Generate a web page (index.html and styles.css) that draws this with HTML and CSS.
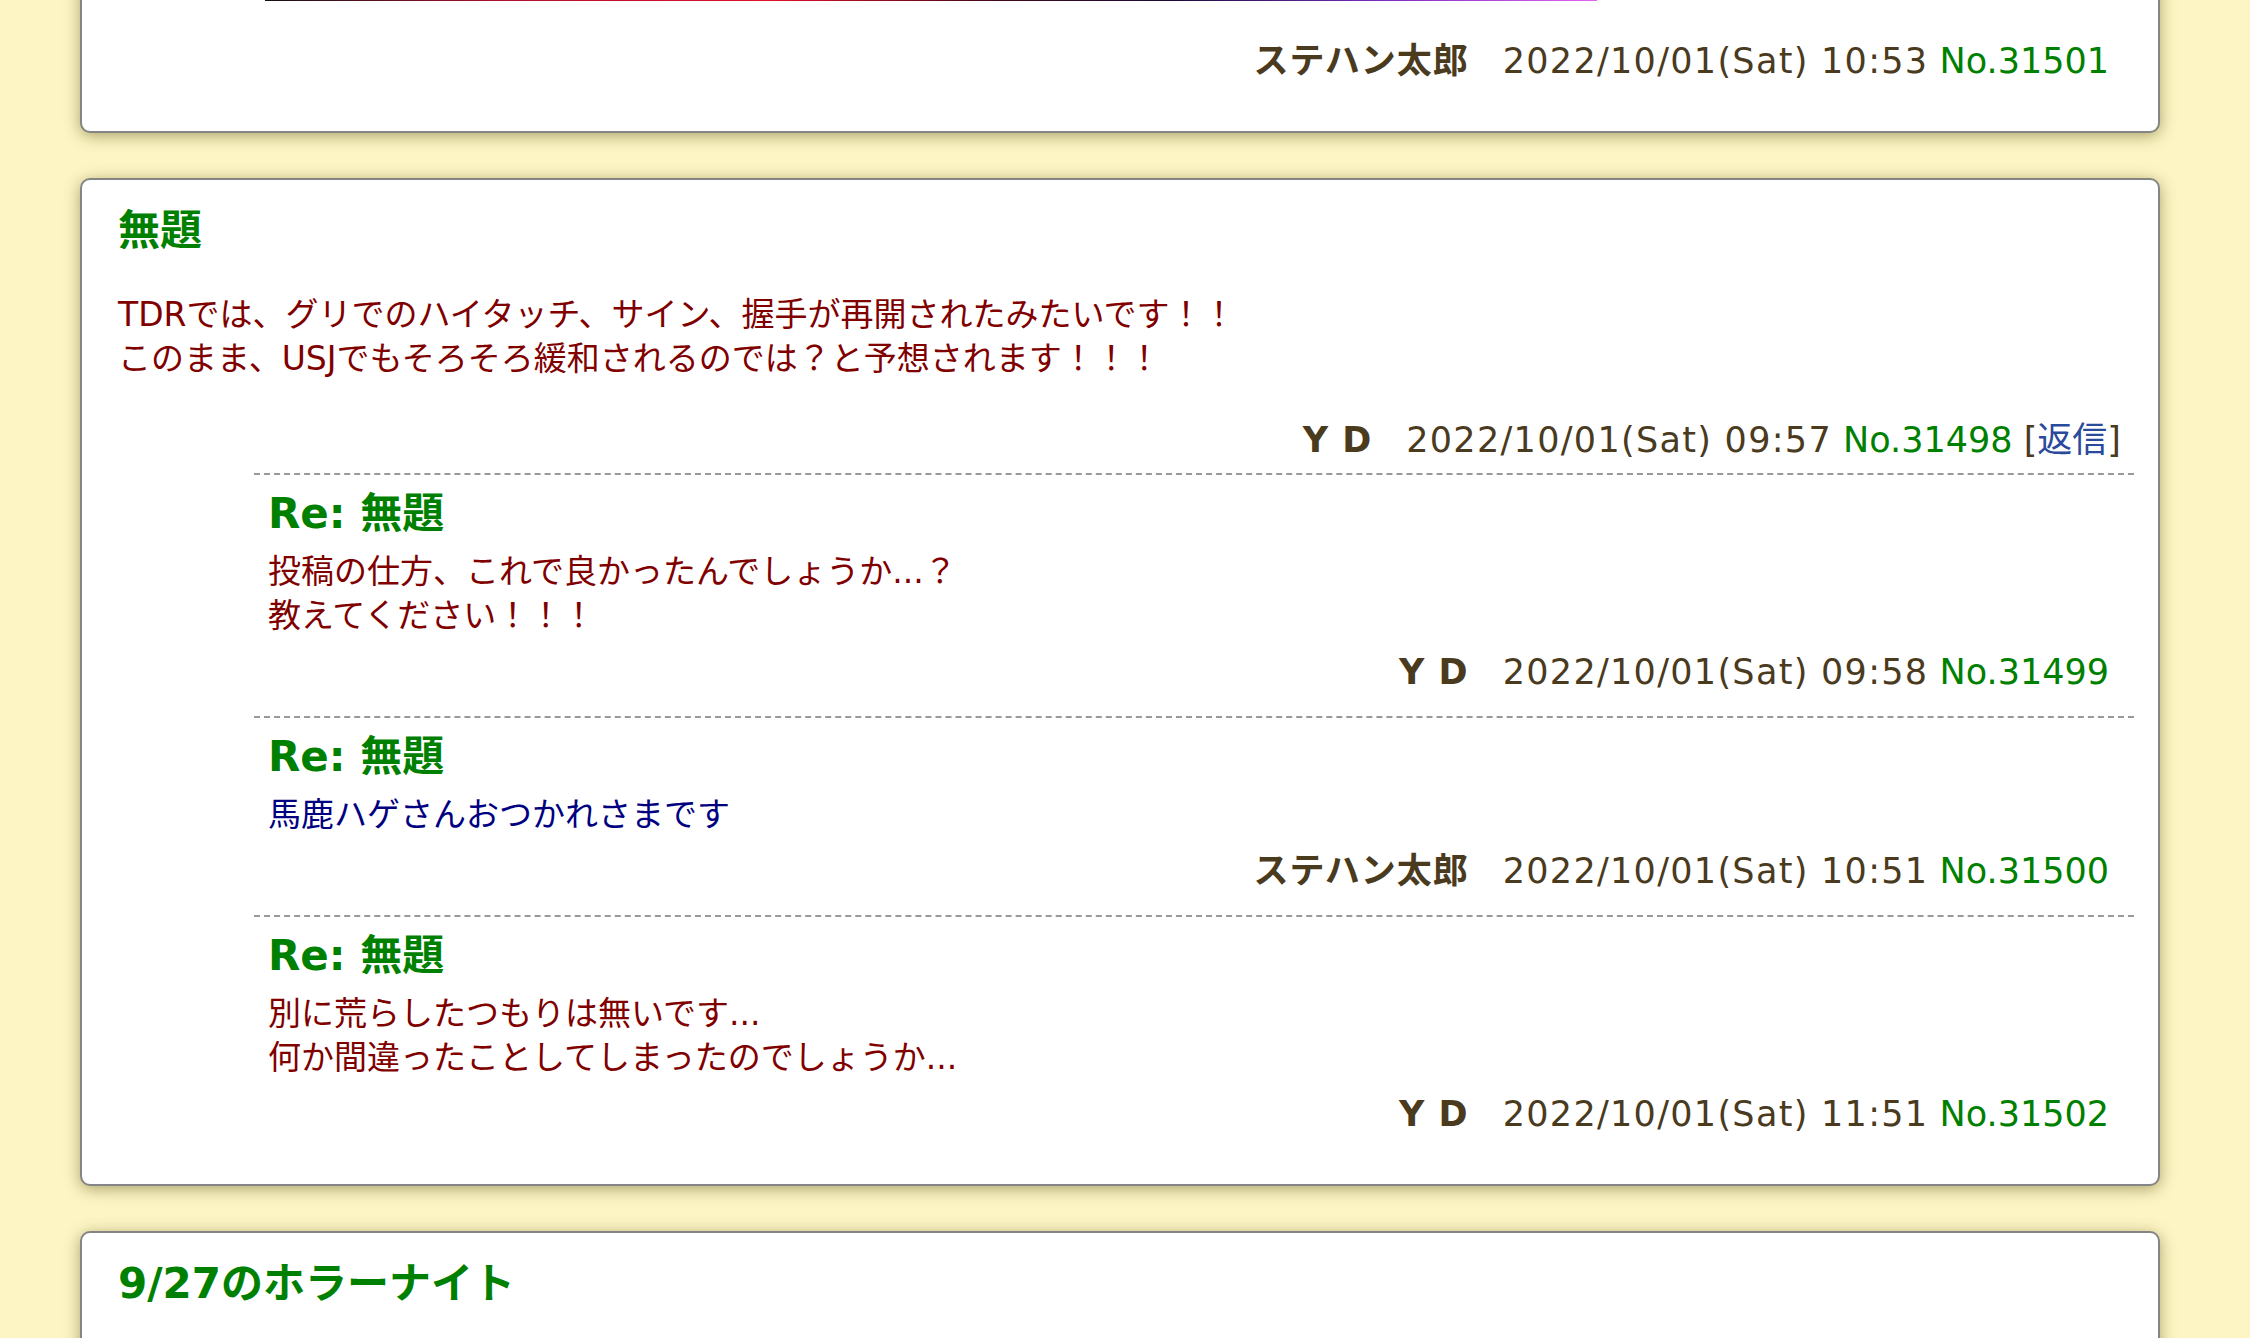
FILE: index.html
```html
<!DOCTYPE html>
<html lang="ja">
<head>
  <meta charset="UTF-8" />
  <title>掲示板</title>
  <meta name="viewport" content="width=device-width, initial-scale=1.0">
  <link rel="stylesheet" href="styles.css">
</head>
<body>
  <div class="board">

    <div class="card cut">
      <div class="reply first">
        <div class="photo"></div>
        <div class="meta"><b class="name">ステハン太郎</b><span class="date">2022/10/01(Sat) 10:53</span> <span class="no">No.31501</span></div>
      </div>
    </div>

    <div class="card">
      <h2 class="title">無題</h2>
      <p class="text red">TDRでは、グリでのハイタッチ、サイン、握手が再開されたみたいです！！<br>このまま、USJでもそろそろ緩和されるのでは？と予想されます！！！</p>
      <div class="meta main"><b class="name">Y D</b><span class="date">2022/10/01(Sat) 09:57</span> <span class="no">No.31498</span> [<a href="#" class="res">返信</a>]</div>

      <div class="reply">
        <h3 class="title">Re: 無題</h3>
        <p class="text red">投稿の仕方、これで良かったんでしょうか...？<br>教えてください！！！</p>
        <div class="meta"><b class="name">Y D</b><span class="date">2022/10/01(Sat) 09:58</span> <span class="no">No.31499</span></div>
      </div>

      <div class="reply">
        <h3 class="title">Re: 無題</h3>
        <p class="text navy">馬鹿ハゲさんおつかれさまです</p>
        <div class="meta"><b class="name">ステハン太郎</b><span class="date">2022/10/01(Sat) 10:51</span> <span class="no">No.31500</span></div>
      </div>

      <div class="reply">
        <h3 class="title">Re: 無題</h3>
        <p class="text red">別に荒らしたつもりは無いです...<br>何か間違ったことしてしまったのでしょうか...</p>
        <div class="meta"><b class="name">Y D</b><span class="date">2022/10/01(Sat) 11:51</span> <span class="no">No.31502</span></div>
      </div>
    </div>

    <div class="card tall">
      <h2 class="title">9/27のホラーナイト</h2>
    </div>

  </div>
</body>
</html>
```

FILE: styles.css
```css
body {
  margin: 0;
  padding: 0;
  background: #fdf6c4;
  font-family: "DejaVu Sans", "Noto Sans CJK JP", sans-serif;
  color: #4a3a1e;
}

.board {
  padding: 0 90px 0 80px;
}

.card {
  background: #fff;
  border: 2px solid #858585;
  border-radius: 10px;
  padding: 22px 24px 26px 36px;
  margin-bottom: 45px;
  box-shadow: 0 3px 16px rgba(70, 60, 0, 0.45);
}

.card.cut {
  margin-top: -435px;
}

.card.tall {
  min-height: 300px;
}

.title {
  margin: 0;
  font-size: 42px;
  line-height: 58px;
  font-weight: bold;
  color: #008000;
}

.text {
  margin: 33px 0 0 0;
  font-size: 33px;
  line-height: 44px;
}

.red {
  color: #800000;
}

.navy {
  color: #000080;
}

.meta {
  text-align: right;
  font-size: 35px;
  line-height: 48px;
  margin-top: 35px;
  margin-bottom: 9px;
  padding-right: 13px;
  white-space: nowrap;
}

.name {
  margin-right: 34px;
  letter-spacing: 1px;
}

.date {
  letter-spacing: 1.3px;
}

.no {
  color: #008000;
}

.res {
  color: #2a4a9c;
  text-decoration: none;
}

.reply {
  margin-left: 136px;
  border-top: 2px dashed #999;
  padding: 10px 25px 20px 14px;
}

.reply.first {
  border-top: none;
  padding-top: 12px;
}

.reply .text {
  margin-top: 7px;
}

.reply .meta {
  margin-top: 10px;
  margin-bottom: 0;
  padding-right: 0;
}

.photo {
  width: 1332px;
  height: 400px;
  margin-left: -3px;
  margin-bottom: 36px;
  background: linear-gradient(90deg, #111 0%, #b01030 18%, #e01028 38%, #400818 55%, #1a0a38 68%, #7a2cc0 84%, #e464f0 100%);
}
```
